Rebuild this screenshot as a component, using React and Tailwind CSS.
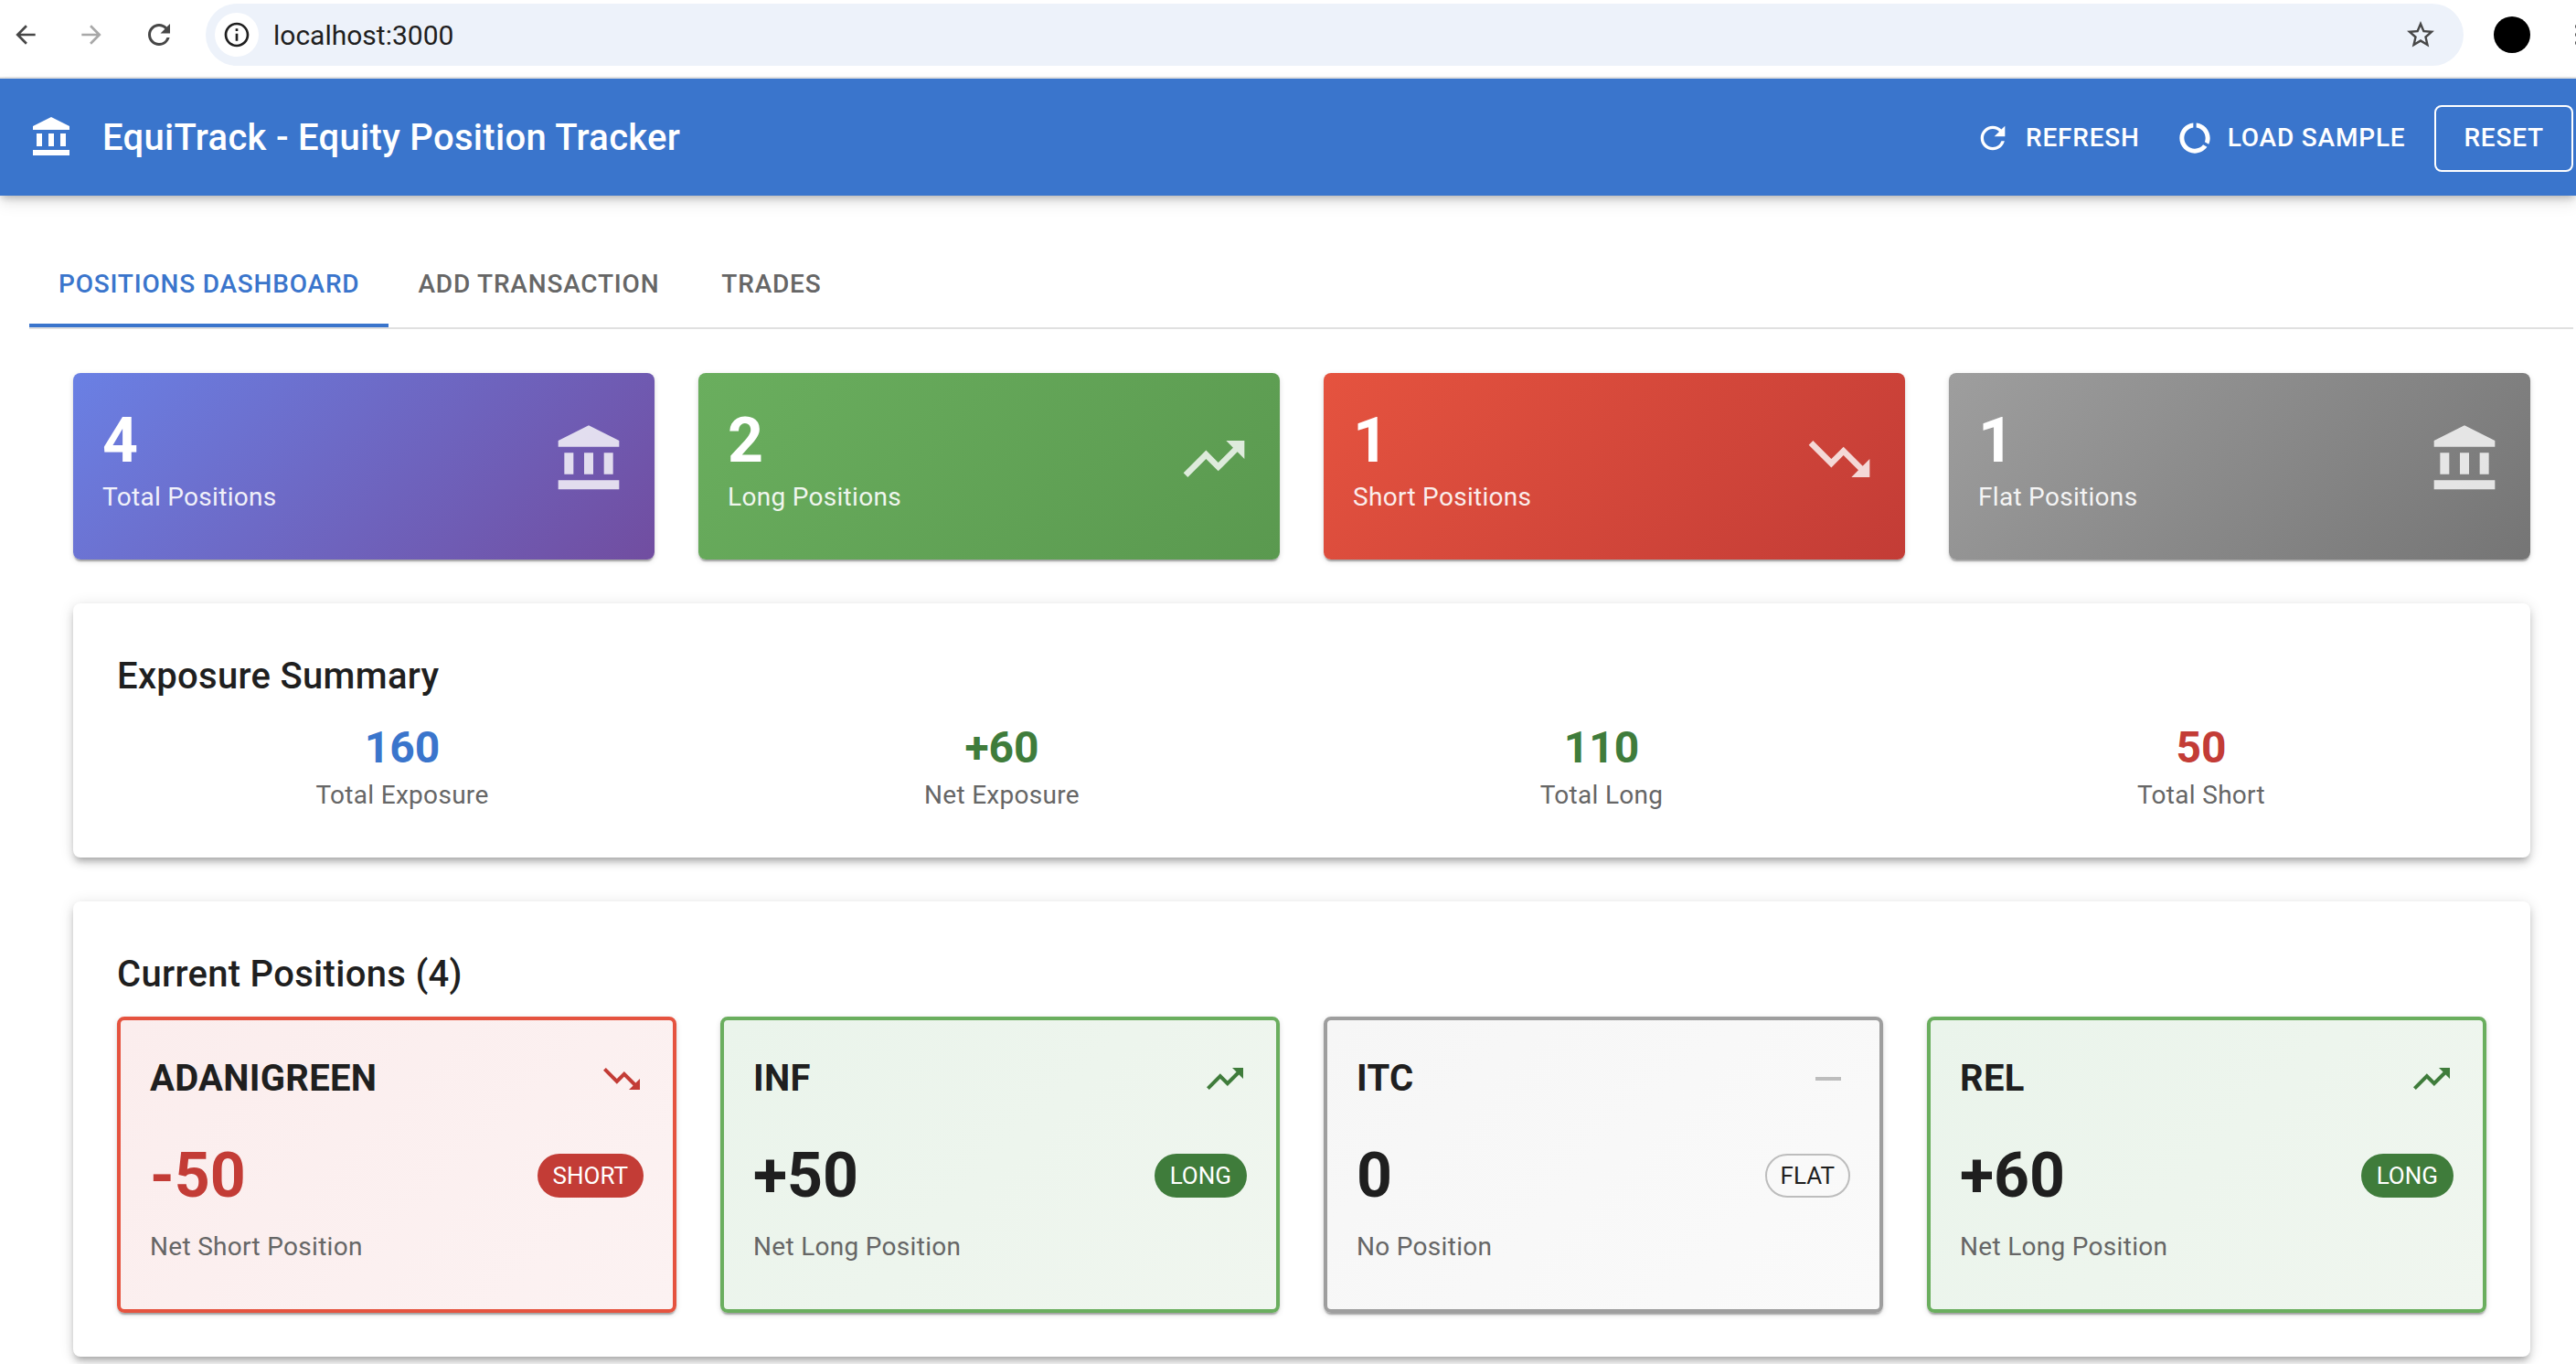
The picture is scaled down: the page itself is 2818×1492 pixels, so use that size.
import {
  MdAccountBalance,
  MdArrowBack,
  MdArrowForward,
  MdDataUsage,
  MdInfoOutline,
  MdMoreVert,
  MdRefresh,
  MdRemove,
  MdStarBorder,
  MdTrendingDown,
  MdTrendingUp,
} from "react-icons/md"

const cardShadow = "shadow-[0_4px_2px_-2px_rgba(0,0,0,0.2),0_2px_2px_0_rgba(0,0,0,0.14),0_2px_6px_0_rgba(0,0,0,0.12)]"
const panelShadow = "shadow-[0_6px_6px_-4px_rgba(0,0,0,0.2),0_6px_8px_0_rgba(0,0,0,0.14),0_2px_16px_0_rgba(0,0,0,0.12)]"

const stats = [
  { value: 4, label: "Total Positions", Icon: MdAccountBalance, bg: "bg-[linear-gradient(135deg,#6a80e4_0%,#714da0_100%)]" },
  { value: 2, label: "Long Positions", Icon: MdTrendingUp, bg: "bg-[linear-gradient(135deg,#6aae5e_0%,#5a994f_100%)]" },
  { value: 1, label: "Short Positions", Icon: MdTrendingDown, bg: "bg-[linear-gradient(135deg,#e5533f_0%,#c33c36_100%)]" },
  { value: 1, label: "Flat Positions", Icon: MdAccountBalance, bg: "bg-[linear-gradient(135deg,#9e9e9e_0%,#757575_100%)]" },
]

const exposure = [
  { value: "160", label: "Total Exposure", color: "text-[#3a75cc]" },
  { value: "+60", label: "Net Exposure", color: "text-[#3f7c3b]" },
  { value: "110", label: "Total Long", color: "text-[#3f7c3b]" },
  { value: "50", label: "Total Short", color: "text-[#c33c36]" },
]

const positions = [
  {
    symbol: "ADANIGREEN",
    value: "-50",
    note: "Net Short Position",
    chip: "SHORT",
    Icon: MdTrendingDown,
    box: "border-[#e5533f] bg-[linear-gradient(135deg,#fbeded_0%,#fcf2f2_100%)]",
    valueColor: "text-[#c33c36]",
    iconColor: "text-[#c33c36]",
    chipClass: "bg-[#c33c36] px-[17px] text-white",
  },
  {
    symbol: "INF",
    value: "+50",
    note: "Net Long Position",
    chip: "LONG",
    Icon: MdTrendingUp,
    box: "border-[#6aae5e] bg-[linear-gradient(135deg,#eaf4eb_0%,#f0f6ef_100%)]",
    valueColor: "text-[#1f1f1f]",
    iconColor: "text-[#3f7c3b]",
    chipClass: "bg-[#3f7c3b] px-[17px] text-white",
  },
  {
    symbol: "ITC",
    value: "0",
    note: "No Position",
    chip: "FLAT",
    Icon: MdRemove,
    box: "border-[#9e9e9e] bg-[linear-gradient(135deg,#f6f6f6_0%,#fafafa_100%)]",
    valueColor: "text-[#1f1f1f]",
    iconColor: "text-[#bdbdbd]",
    chipClass: "border-2 border-[#bdbdbd] px-[15px] text-[#1f1f1f]",
  },
  {
    symbol: "REL",
    value: "+60",
    note: "Net Long Position",
    chip: "LONG",
    Icon: MdTrendingUp,
    box: "border-[#6aae5e] bg-[linear-gradient(135deg,#eaf4eb_0%,#f0f6ef_100%)]",
    valueColor: "text-[#1f1f1f]",
    iconColor: "text-[#3f7c3b]",
    chipClass: "bg-[#3f7c3b] px-[17px] text-white",
  },
]

function BrowserBar() {
  return (
    <div className="flex h-[86px] items-center overflow-hidden border-b-2 border-[#e6e6e6] bg-white pb-2 pl-3">
      <MdArrowBack className="size-8 shrink-0 text-[#474747]" />
      <MdArrowForward className="ml-10 size-8 shrink-0 text-[#a8a8a8]" />
      <MdRefresh className="ml-10 size-9 shrink-0 text-[#474747]" />
      <div className="ml-[33px] flex h-[68px] w-[2470px] shrink-0 items-center rounded-full bg-[#edf2fa] pl-[10px] pr-[29px]">
        <div className="flex size-12 items-center justify-center rounded-full bg-white">
          <MdInfoOutline className="size-8 text-[#1f1f1f]" />
        </div>
        <span className="ml-4 text-[30px] text-[#1f1f1f]">localhost:3000</span>
        <MdStarBorder className="ml-auto size-9 text-[#474747]" />
      </div>
      <div className="ml-[33px] size-10 shrink-0 rounded-full bg-black" />
      <MdMoreVert className="ml-[34px] size-9 shrink-0 text-[#474747]" />
    </div>
  )
}

function AppHeader() {
  return (
    <header className="relative z-10 flex h-32 items-center bg-[#3a75cc] pl-8 pr-[3px] text-white shadow-[0_4px_8px_-2px_rgba(0,0,0,0.25),0_8px_16px_0_rgba(0,0,0,0.1)]">
      <MdAccountBalance className="size-12" />
      <h1 className="ml-8 pt-[2px] text-[40px] font-medium leading-[64px] tracking-[0.3px]">EquiTrack - Equity Position Tracker</h1>
      <div className="ml-auto flex items-center gap-4 pt-[2px] text-[28px] font-medium tracking-[0.8px]">
        <button className="flex items-center gap-4 px-4 py-3">
          <MdRefresh className="-ml-2 size-10" />
          REFRESH
        </button>
        <button className="flex items-center gap-4 px-4 py-3">
          <MdDataUsage className="-ml-2 size-10" />
          LOAD SAMPLE
        </button>
        <button className="h-[73px] rounded-lg border-2 border-white px-[30px]">RESET</button>
      </div>
    </header>
  )
}

function Tabs() {
  return (
    <div className="ml-8 mr-[3px] mt-12 flex border-b-2 border-[#e0e0e0] text-[28px] font-medium tracking-[0.8px]">
      <div className="flex h-24 items-center border-b-4 border-[#3a75cc] px-8 pt-[6px] text-[#3a75cc]">POSITIONS DASHBOARD</div>
      <div className="flex h-24 items-center px-8 pt-[2px] text-[#666666]">ADD TRANSACTION</div>
      <div className="ml-1 flex h-24 items-center px-8 pt-[2px] text-[#666666]">TRADES</div>
    </div>
  )
}

function StatCard({ value, label, Icon, bg }) {
  return (
    <div className={`flex items-center justify-between rounded-lg px-8 pb-12 pt-8 text-white ${bg} ${cardShadow}`}>
      <div>
        <div className="text-[68px] font-bold leading-[84px]">{value}</div>
        <div className="text-[28px] leading-10 tracking-[0.3px] opacity-90">{label}</div>
      </div>
      <Icon className="size-20 opacity-80" />
    </div>
  )
}

function PositionCard({ p }) {
  const Icon = p.Icon
  return (
    <div className={`rounded-lg border-4 px-8 pb-12 pt-8 ${p.box} ${cardShadow}`}>
      <div className="mb-8 flex items-center justify-between">
        <div className="text-[40px] font-bold leading-[64px] tracking-[0.3px] text-[#1f1f1f]">{p.symbol}</div>
        <Icon className={`size-12 ${p.iconColor}`} />
      </div>
      <div className="mb-4 flex items-center justify-between">
        <div className={`text-[68px] font-bold leading-[84px] ${p.valueColor}`}>{p.value}</div>
        <div className={`flex h-12 items-center rounded-full text-[26px] ${p.chipClass}`}>{p.chip}</div>
      </div>
      <div className="text-[28px] leading-10 tracking-[0.3px] text-[#666666]">{p.note}</div>
    </div>
  )
}

export default function App() {
  return (
    <div className="h-[1492px] overflow-hidden bg-white font-[Roboto,sans-serif]">
      <BrowserBar />
      <AppHeader />
      <Tabs />
      <main className="mt-12 flex flex-col gap-12 pl-20 pr-[50px]">
        <div className="grid grid-cols-4 gap-12">
          {stats.map((s) => (
            <StatCard key={s.label} {...s} />
          ))}
        </div>

        <section className={`rounded-lg bg-white p-12 ${panelShadow}`}>
          <h2 className="mb-[14px] text-[40px] font-medium leading-[64px] tracking-[0.3px] text-[#1f1f1f]">Exposure Summary</h2>
          <div className="grid grid-cols-4 gap-8 text-center">
            {exposure.map((e) => (
              <div key={e.label}>
                <div className={`text-[48px] font-bold leading-[64px] ${e.color}`}>{e.value}</div>
                <div className="text-[28px] leading-10 tracking-[0.3px] text-[#666666]">{e.label}</div>
              </div>
            ))}
          </div>
        </section>

        <section className={`rounded-lg bg-white p-12 ${panelShadow}`}>
          <h2 className="mb-[14px] text-[40px] font-medium leading-[64px] tracking-[0.3px] text-[#1f1f1f]">Current Positions (4)</h2>
          <div className="grid grid-cols-4 gap-12">
            {positions.map((p) => (
              <PositionCard key={p.symbol} p={p} />
            ))}
          </div>
        </section>
      </main>
    </div>
  )
}
